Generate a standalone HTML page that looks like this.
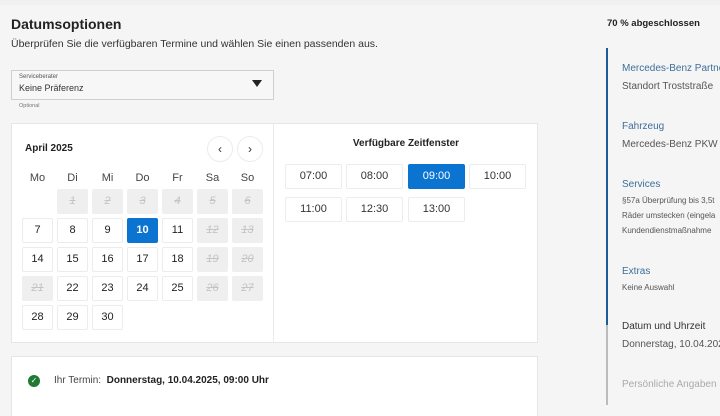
<!DOCTYPE html>
<html><head><meta charset="utf-8"><style>
*{margin:0;padding:0;box-sizing:border-box}
body{width:720px;height:405px;overflow:hidden;background:#f5f5f5;font-family:"Liberation Sans","DejaVu Sans",sans-serif;color:#222;position:relative}
.a{position:absolute}
.card{background:#fff;border:1px solid #e6e6e6}
.cell{position:absolute;width:31px;height:25px;border:1px solid #ececec;background:#fff;font-size:11px;text-align:center;line-height:23px;color:#222;border-radius:2px}
.dis{background:#efefef;border-color:#efefef;color:#c4c4c4;font-style:italic;text-decoration:line-through}
.slot{position:absolute;width:57px;height:25px;border:1px solid #ececec;background:#fff;font-size:11px;text-align:center;line-height:23px;color:#333;border-radius:2px}
.cell.sel,.slot.sel{background:#0a74d0;border-color:#0a74d0;color:#fff}
.cell.sel{font-weight:bold}
.wd{position:absolute;width:31px;text-align:center;font-size:11px;color:#444;top:172px}
.sb{position:absolute;left:622px;font-size:10px;white-space:nowrap}
.t{color:#3d6e9a;font-size:10px}
.v{color:#555}
</style></head><body>
<div class="a" style="left:0;top:0;width:720px;height:5px;background:#f0f0f0"></div>
<div class="a" style="left:11px;top:16px;font-size:14px;font-weight:bold;color:#222">Datumsoptionen</div>
<div class="a" style="left:11px;top:38px;font-size:10.5px;color:#333">Überprüfen Sie die verfügbaren Termine und wählen Sie einen passenden aus.</div>
<div class="a" style="left:11px;top:70px;width:263px;height:30px;background:#f7f7f7;border:1px solid #cfcfcf"></div>
<div class="a" style="left:19px;top:74px;font-size:6px;color:#555">Serviceberater</div>
<div class="a" style="left:19px;top:83px;font-size:9px;color:#333">Keine Präferenz</div>
<div class="a" style="left:252px;top:80px;width:0;height:0;border-left:5px solid transparent;border-right:5px solid transparent;border-top:7px solid #222"></div>
<div class="a" style="left:19px;top:103px;font-size:5.5px;color:#777">Optional</div>

<div class="a card" style="left:11px;top:123px;width:527px;height:220px"></div>
<div class="a" style="left:273px;top:124px;width:1px;height:218px;background:#ebebeb"></div>
<div class="a" style="left:25px;top:143px;font-size:10px;font-weight:bold">April 2025</div>
<div class="a" style="left:207px;top:136px;width:26px;height:26px;border-radius:50%;border:1px solid #ececec;font-size:12px;text-align:center;line-height:24px;color:#333">&#8249;</div>
<div class="a" style="left:237px;top:136px;width:26px;height:26px;border-radius:50%;border:1px solid #ececec;font-size:12px;text-align:center;line-height:24px;color:#333">&#8250;</div>
<div class="wd" style="left:22px">Mo</div><div class="wd" style="left:57px">Di</div><div class="wd" style="left:92px">Mi</div><div class="wd" style="left:127px">Do</div><div class="wd" style="left:162px">Fr</div><div class="wd" style="left:197px">Sa</div><div class="wd" style="left:232px">So</div>

<div class="cell dis" style="left:57px;top:189px">1</div><div class="cell dis" style="left:92px;top:189px">2</div><div class="cell dis" style="left:127px;top:189px">3</div><div class="cell dis" style="left:162px;top:189px">4</div><div class="cell dis" style="left:197px;top:189px">5</div><div class="cell dis" style="left:232px;top:189px">6</div>
<div class="cell" style="left:22px;top:218px">7</div><div class="cell" style="left:57px;top:218px">8</div><div class="cell" style="left:92px;top:218px">9</div><div class="cell sel" style="left:127px;top:218px">10</div><div class="cell" style="left:162px;top:218px">11</div><div class="cell dis" style="left:197px;top:218px">12</div><div class="cell dis" style="left:232px;top:218px">13</div>
<div class="cell" style="left:22px;top:247px">14</div><div class="cell" style="left:57px;top:247px">15</div><div class="cell" style="left:92px;top:247px">16</div><div class="cell" style="left:127px;top:247px">17</div><div class="cell" style="left:162px;top:247px">18</div><div class="cell dis" style="left:197px;top:247px">19</div><div class="cell dis" style="left:232px;top:247px">20</div>
<div class="cell dis" style="left:22px;top:276px">21</div><div class="cell" style="left:57px;top:276px">22</div><div class="cell" style="left:92px;top:276px">23</div><div class="cell" style="left:127px;top:276px">24</div><div class="cell" style="left:162px;top:276px">25</div><div class="cell dis" style="left:197px;top:276px">26</div><div class="cell dis" style="left:232px;top:276px">27</div>
<div class="cell" style="left:22px;top:305px">28</div><div class="cell" style="left:57px;top:305px">29</div><div class="cell" style="left:92px;top:305px">30</div>

<div class="a" style="left:274px;width:264px;text-align:center;top:138px;font-size:10px;font-weight:bold;color:#222">Verfügbare Zeitfenster</div>
<div class="slot" style="left:285px;top:164px">07:00</div><div class="slot" style="left:346px;top:164px">08:00</div><div class="slot sel" style="left:408px;top:164px">09:00</div><div class="slot" style="left:469px;top:164px">10:00</div>
<div class="slot" style="left:285px;top:197px">11:00</div><div class="slot" style="left:346px;top:197px">12:30</div><div class="slot" style="left:408px;top:197px">13:00</div>

<div class="a card" style="left:11px;top:356px;width:527px;height:60px;border-bottom:none"></div>
<div class="a" style="left:28px;top:375px;width:12px;height:12px;border-radius:50%;background:#1f7a35;color:#fff;font-size:8px;text-align:center;line-height:12px">&#10003;</div>
<div class="a" style="left:54px;top:375px;font-size:10px;color:#444">Ihr Termin:&nbsp; <b style="color:#222">Donnerstag, 10.04.2025, 09:00 Uhr</b></div>

<div class="a" style="left:607px;top:18px;font-size:9.5px;font-weight:bold;color:#222">70 % abgeschlossen</div>
<div class="a" style="left:606px;top:48px;width:2px;height:277px;background:#1d5c96"></div>
<div class="a" style="left:606px;top:325px;width:2px;height:80px;background:#bbb"></div>
<div class="sb t" style="top:63px">Mercedes-Benz Partner</div>
<div class="sb v" style="top:81px">Standort Troststraße</div>
<div class="sb t" style="top:121px">Fahrzeug</div>
<div class="sb v" style="top:139px">Mercedes-Benz PKW Be</div>
<div class="sb t" style="top:179px">Services</div>
<div class="sb v" style="top:196px;font-size:8px">§57a Überprüfung bis 3,5t</div>
<div class="sb v" style="top:211px;font-size:8px">Räder umstecken (eingela</div>
<div class="sb v" style="top:226px;font-size:8px">Kundendienstmaßnahme</div>
<div class="sb t" style="top:266px">Extras</div>
<div class="sb v" style="top:283px;font-size:8px">Keine Auswahl</div>
<div class="sb" style="top:321px;color:#333">Datum und Uhrzeit</div>
<div class="sb v" style="top:339px">Donnerstag, 10.04.2025</div>
<div class="sb" style="top:379px;color:#aaa">Persönliche Angaben</div>
</body></html>
